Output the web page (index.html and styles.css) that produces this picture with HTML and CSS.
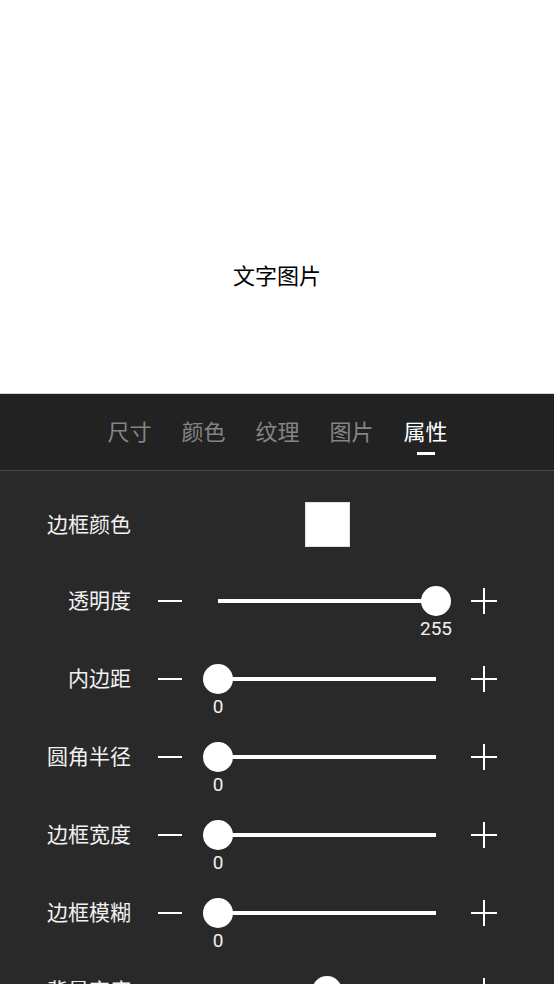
FILE: index.html
```html
<!DOCTYPE html>
<html lang="zh-CN">
<head>
    <meta charset="UTF-8">
    <meta name="viewport" content="width=device-width, initial-scale=1.0">
    <title>文字图片</title>
    <link rel="stylesheet" href="styles.css">
</head>
<body>
    <div class="preview">
        <div class="preview-text">文字图片</div>
    </div>

    <div class="panel">
        <div class="tabs">
            <div class="tab"><span>尺寸</span><i></i></div>
            <div class="tab"><span>颜色</span><i></i></div>
            <div class="tab"><span>纹理</span><i></i></div>
            <div class="tab"><span>图片</span><i></i></div>
            <div class="tab active"><span>属性</span><i></i></div>
        </div>

        <div class="settings">
            <div class="row color-row">
                <span class="label">边框颜色</span>
                <span class="step-space"></span>
                <div class="slot">
                    <span class="swatch"></span>
                </div>
            </div>

            <div class="row slider-row">
                <span class="label">透明度</span>
                <button class="step" type="button">
                    <svg width="26" height="26" viewBox="0 0 26 26"><line x1="1" y1="13" x2="25" y2="13"/></svg>
                </button>
                <div class="slot">
                    <div class="slider-bar"><span class="thumb" style="left:100%"></span></div>
                    <div class="slider-value"><span style="left:100%">255</span></div>
                </div>
                <button class="step" type="button">
                    <svg width="26" height="26" viewBox="0 0 26 26"><line x1="0" y1="13" x2="26" y2="13"/><line x1="13" y1="0" x2="13" y2="26"/></svg>
                </button>
            </div>

            <div class="row slider-row">
                <span class="label">内边距</span>
                <button class="step" type="button">
                    <svg width="26" height="26" viewBox="0 0 26 26"><line x1="1" y1="13" x2="25" y2="13"/></svg>
                </button>
                <div class="slot">
                    <div class="slider-bar"><span class="thumb" style="left:0%"></span></div>
                    <div class="slider-value"><span style="left:0%">0</span></div>
                </div>
                <button class="step" type="button">
                    <svg width="26" height="26" viewBox="0 0 26 26"><line x1="0" y1="13" x2="26" y2="13"/><line x1="13" y1="0" x2="13" y2="26"/></svg>
                </button>
            </div>

            <div class="row slider-row">
                <span class="label">圆角半径</span>
                <button class="step" type="button">
                    <svg width="26" height="26" viewBox="0 0 26 26"><line x1="1" y1="13" x2="25" y2="13"/></svg>
                </button>
                <div class="slot">
                    <div class="slider-bar"><span class="thumb" style="left:0%"></span></div>
                    <div class="slider-value"><span style="left:0%">0</span></div>
                </div>
                <button class="step" type="button">
                    <svg width="26" height="26" viewBox="0 0 26 26"><line x1="0" y1="13" x2="26" y2="13"/><line x1="13" y1="0" x2="13" y2="26"/></svg>
                </button>
            </div>

            <div class="row slider-row">
                <span class="label">边框宽度</span>
                <button class="step" type="button">
                    <svg width="26" height="26" viewBox="0 0 26 26"><line x1="1" y1="13" x2="25" y2="13"/></svg>
                </button>
                <div class="slot">
                    <div class="slider-bar"><span class="thumb" style="left:0%"></span></div>
                    <div class="slider-value"><span style="left:0%">0</span></div>
                </div>
                <button class="step" type="button">
                    <svg width="26" height="26" viewBox="0 0 26 26"><line x1="0" y1="13" x2="26" y2="13"/><line x1="13" y1="0" x2="13" y2="26"/></svg>
                </button>
            </div>

            <div class="row slider-row">
                <span class="label">边框模糊</span>
                <button class="step" type="button">
                    <svg width="26" height="26" viewBox="0 0 26 26"><line x1="1" y1="13" x2="25" y2="13"/></svg>
                </button>
                <div class="slot">
                    <div class="slider-bar"><span class="thumb" style="left:0%"></span></div>
                    <div class="slider-value"><span style="left:0%">0</span></div>
                </div>
                <button class="step" type="button">
                    <svg width="26" height="26" viewBox="0 0 26 26"><line x1="0" y1="13" x2="26" y2="13"/><line x1="13" y1="0" x2="13" y2="26"/></svg>
                </button>
            </div>

            <div class="row slider-row">
                <span class="label">背景宽度</span>
                <button class="step" type="button">
                    <svg width="26" height="26" viewBox="0 0 26 26"><line x1="1" y1="13" x2="25" y2="13"/></svg>
                </button>
                <div class="slot">
                    <div class="slider-bar"><span class="thumb" style="left:50%"></span></div>
                    <div class="slider-value"><span style="left:50%">128</span></div>
                </div>
                <button class="step" type="button">
                    <svg width="26" height="26" viewBox="0 0 26 26"><line x1="0" y1="13" x2="26" y2="13"/><line x1="13" y1="0" x2="13" y2="26"/></svg>
                </button>
            </div>
        </div>
    </div>
</body>
</html>
```

FILE: styles.css
```css
html, body {
    height: 984px;
    overflow: hidden;
}
body {
    margin: 0;
    font-family: Roboto, "Noto Sans CJK SC", sans-serif;
    background-color: #fff;
}
.preview {
    height: 393px;
    text-align: center;
}
.preview-text {
    padding-top: 262px;
    font-size: 22px;
    line-height: 30px;
    color: #000;
}
.panel {
    border-top: 1px solid #d4d4d4;
    background-color: #292929;
    min-height: 600px;
}
.tabs {
    display: flex;
    justify-content: center;
    gap: 30px;
    height: 77px;
    box-sizing: border-box;
    padding-top: 24px;
    padding-left: 1px;
    background-color: #222;
    border-bottom: 1px solid #4c4c4c;
}
.tab {
    display: flex;
    flex-direction: column;
    align-items: center;
    font-size: 22px;
    line-height: 30px;
    color: #858585;
}
.tab i {
    display: block;
    width: 18px;
    height: 3px;
    margin-top: 4px;
}
.tab.active {
    color: #fff;
}
.tab.active i {
    background-color: #fff;
}
.settings {
    padding-top: 31px;
}
.row {
    display: flex;
    align-items: flex-start;
}
.label {
    width: 131px;
    text-align: right;
    font-size: 21px;
    line-height: 30px;
    color: #f2f2f2;
    white-space: nowrap;
}
.color-row {
    align-items: center;
    height: 45px;
    margin-bottom: 39px;
}
.step-space {
    width: 64px;
    margin-left: 7px;
}
.slot {
    width: 218px;
    margin: 0 16px;
}
.color-row .slot {
    display: flex;
    justify-content: center;
}
.swatch {
    width: 45px;
    height: 45px;
    box-sizing: border-box;
    background-color: #fff;
    border: 1px solid #e2e2e2;
}
.slider-row {
    margin-bottom: 25px;
}
.step {
    width: 64px;
    height: 30px;
    padding: 0;
    border: none;
    background: none;
    display: flex;
    align-items: center;
    justify-content: center;
}
.slider-row .step:first-of-type {
    margin-left: 7px;
}
.step svg line {
    stroke: #fff;
    stroke-width: 2;
}
.slider-bar {
    position: relative;
    height: 30px;
}
.slider-bar::before {
    content: "";
    position: absolute;
    left: 0;
    right: 0;
    top: 13px;
    height: 4px;
    background-color: #fff;
}
.thumb {
    position: absolute;
    top: 50%;
    width: 30px;
    height: 30px;
    border-radius: 50%;
    background-color: #fff;
    transform: translate(-50%, -50%);
}
.slider-value {
    position: relative;
    height: 20px;
    margin-top: 3px;
    font-size: 19px;
    line-height: 20px;
    color: #f2f2f2;
}
.slider-value span {
    position: absolute;
    top: 0;
    transform: translateX(-50%);
}
```
